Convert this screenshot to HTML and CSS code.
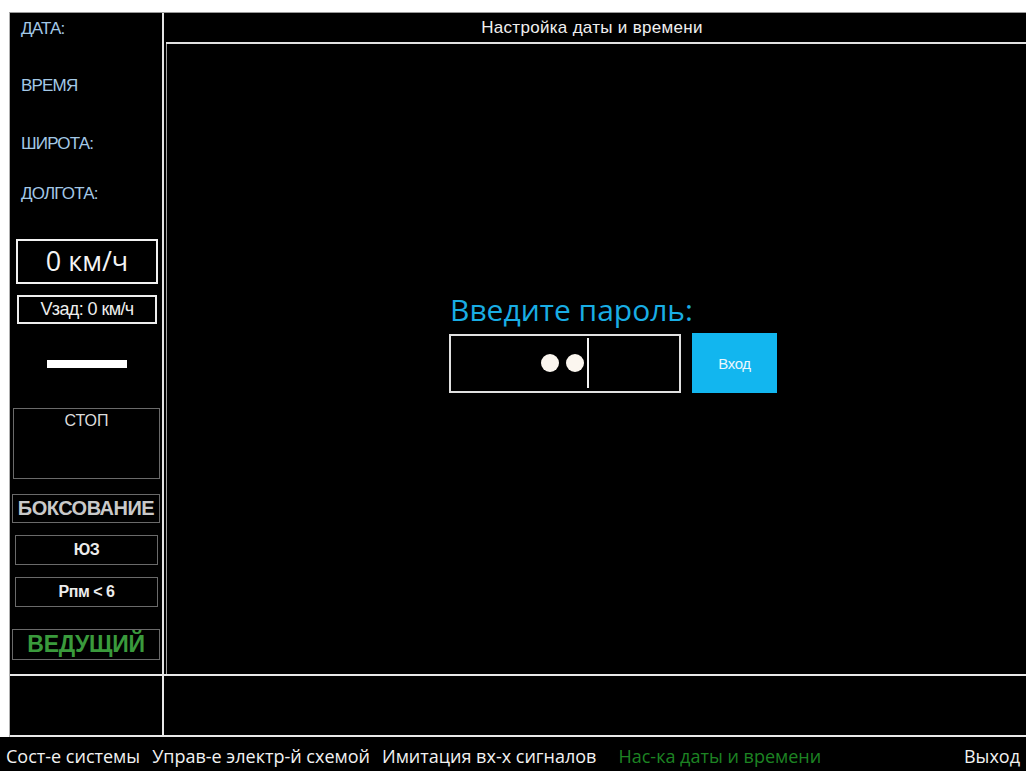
FILE: index.html
```html
<!DOCTYPE html>
<html lang="ru">
<head>
<meta charset="utf-8">
<title>Настройка даты и времени</title>
<link rel="stylesheet" href="styles.css">
</head>
<body>
<div class="screen">
  <div class="app">
    <div class="upper">
      <aside class="side">
        <div class="label">ДАТА:</div>
        <div class="label">ВРЕМЯ</div>
        <div class="label">ШИРОТА:</div>
        <div class="label">ДОЛГОТА:</div>
        <div class="speed">0 км/ч</div>
        <div class="vset">Vзад: 0 км/ч</div>
        <div class="bar"></div>
        <div class="status stop">СТОП</div>
        <div class="status slip">БОКСОВАНИЕ</div>
        <div class="status flag">ЮЗ</div>
        <div class="status flag">Рпм &lt; 6</div>
        <div class="status lead">ВЕДУЩИЙ</div>
      </aside>
      <main class="main">
        <div class="title">Настройка даты и времени</div>
        <div class="content">
          <form class="login">
            <div class="prompt">Введите пароль:</div>
            <div class="row">
              <div class="field"><span class="dot"></span><span class="dot"></span><span class="caret"></span></div>
              <button type="button" class="enter">Вход</button>
            </div>
          </form>
        </div>
      </main>
    </div>
    <div class="lower">
      <div class="lower-left"></div>
      <div class="lower-right"></div>
    </div>
  </div>
  <nav class="menu">
    <span class="item">Сост-е системы</span>
    <span class="item">Управ-е электр-й схемой</span>
    <span class="item">Имитация вх-х сигналов</span>
    <span class="item active">Нас-ка даты и времени</span>
    <span class="item exit">Выход</span>
  </nav>
</div>
</body>
</html>
```

FILE: styles.css
```css
* {
  box-sizing: border-box;
}

html, body {
  margin: 0;
  padding: 0;
  background: #ffffff;
}

body {
  width: 1026px;
  height: 771px;
  overflow: hidden;
  font-family: "Liberation Sans", Arial, sans-serif;
}

.screen {
  display: flex;
  flex-direction: column;
  height: 771px;
}

/* black working area */
.app {
  margin: 12px 0 0 9px;
  background: #000;
  border-top: 1px solid #9a9a9a;
  border-left: 1px solid #b0b0b0;
}

.upper {
  display: flex;
  height: 661px;
}

/* left indicator column */
.side {
  width: 154px;
  border-right: 2px solid #e4e4e4;
  display: flex;
  flex-direction: column;
  padding-top: 7px;
}

.label {
  height: 18px;
  line-height: 18px;
  margin-left: 11px;
  margin-bottom: 39px;
  font-size: 17px;
  color: #a3c8e6;
  letter-spacing: -0.8px;
}

.label:nth-child(2) { margin-bottom: 40px; }
.label:nth-child(3) { margin-bottom: 32px; }
.label:nth-child(4) { margin-bottom: 36px; }

.speed {
  width: 142px;
  height: 45px;
  margin-left: 6px;
  border: 2px solid #f2f2f2;
  color: #f4f4f4;
  font-family: "Open Sans", sans-serif;
  font-size: 27px;
  line-height: 40px;
  text-align: center;
}

.vset {
  width: 140px;
  height: 29px;
  margin: 11px 0 0 7px;
  border: 2px solid #eeeeee;
  color: #eeeeee;
  font-size: 18px;
  line-height: 25px;
  text-align: center;
  letter-spacing: -0.6px;
  white-space: nowrap;
}

.bar {
  width: 80px;
  height: 8px;
  margin: 36px 0 0 37px;
  background: #ffffff;
}

.status {
  border: 1px solid #6a6a6a;
  text-align: center;
  color: #dcdcdc;
}

.stop {
  width: 147px;
  height: 71px;
  margin: 40px 0 0 3px;
  font-size: 16px;
  line-height: 24px;
}

.slip {
  width: 148px;
  height: 29px;
  margin: 15px 0 0 2px;
  font-size: 20px;
  font-weight: bold;
  line-height: 27px;
  color: #c9c9c9;
  letter-spacing: -0.5px;
  white-space: nowrap;
}

.flag {
  width: 143px;
  height: 30px;
  margin: 12px 0 0 5px;
  font-size: 16px;
  font-weight: bold;
  line-height: 28px;
  color: #ececec;
  letter-spacing: -0.5px;
}

.lead {
  width: 148px;
  height: 31px;
  margin: 22px 0 0 2px;
  font-size: 23px;
  font-weight: bold;
  line-height: 29px;
  color: #3a9a3c;
  letter-spacing: -0.3px;
}

/* right part: title + work area */
.main {
  flex: 1;
  display: flex;
  flex-direction: column;
  padding-left: 2px;
}

.title {
  height: 31px;
  border-bottom: 2px solid #e2e2e2;
  color: #f0f0f0;
  font-size: 17px;
  line-height: 29px;
  text-align: center;
  padding-right: 8px;
  letter-spacing: 0.3px;
}

.content {
  flex: 1;
  border-left: 1px solid #a0a0a0;
  padding: 248px 0 0 282px;
}

.login {
  margin: 0;
}

.prompt {
  font-family: "Open Sans", sans-serif;
  font-size: 30px;
  line-height: 36px;
  color: #19ade4;
  margin-left: 1px;
}

.row {
  display: flex;
  align-items: center;
  gap: 11px;
  margin-top: 5px;
}

.field {
  width: 232px;
  height: 59px;
  border: 2px solid #e0e0e0;
  display: flex;
  align-items: center;
  padding-left: 90px;
  gap: 7px;
}

.dot {
  width: 18px;
  height: 18px;
  border-radius: 50%;
  background: #fbf6ef;
}

.caret {
  width: 2px;
  height: 50px;
  margin-left: -4px;
  background: #f4f4f4;
}

.enter {
  width: 85px;
  height: 60px;
  border: none;
  background: #12b6ef;
  color: #eaf7fd;
  font-family: "Liberation Sans", Arial, sans-serif;
  font-size: 15px;
  letter-spacing: -0.4px;
  padding: 0;
}

/* bottom message strip */
.lower {
  display: flex;
  height: 63px;
  border-top: 2px solid #e8e8e8;
  border-bottom: 2px solid #e8e8e8;
}

.lower-left {
  width: 154px;
  border-right: 2px solid #e8e8e8;
}

.lower-right {
  flex: 1;
}

/* page menu */
.menu {
  flex: 1;
  background: #000;
  display: flex;
  align-items: center;
  padding: 4px 6px 0 6px;
  font-family: "Open Sans", sans-serif;
  font-size: 18px;
  color: #f2f2f2;
  white-space: nowrap;
}

.item {
  margin-right: 12px;
}

.item.active {
  margin-left: 10px;
  color: #1d8423;
}

.item.exit {
  margin-left: auto;
  margin-right: 0;
}
```
